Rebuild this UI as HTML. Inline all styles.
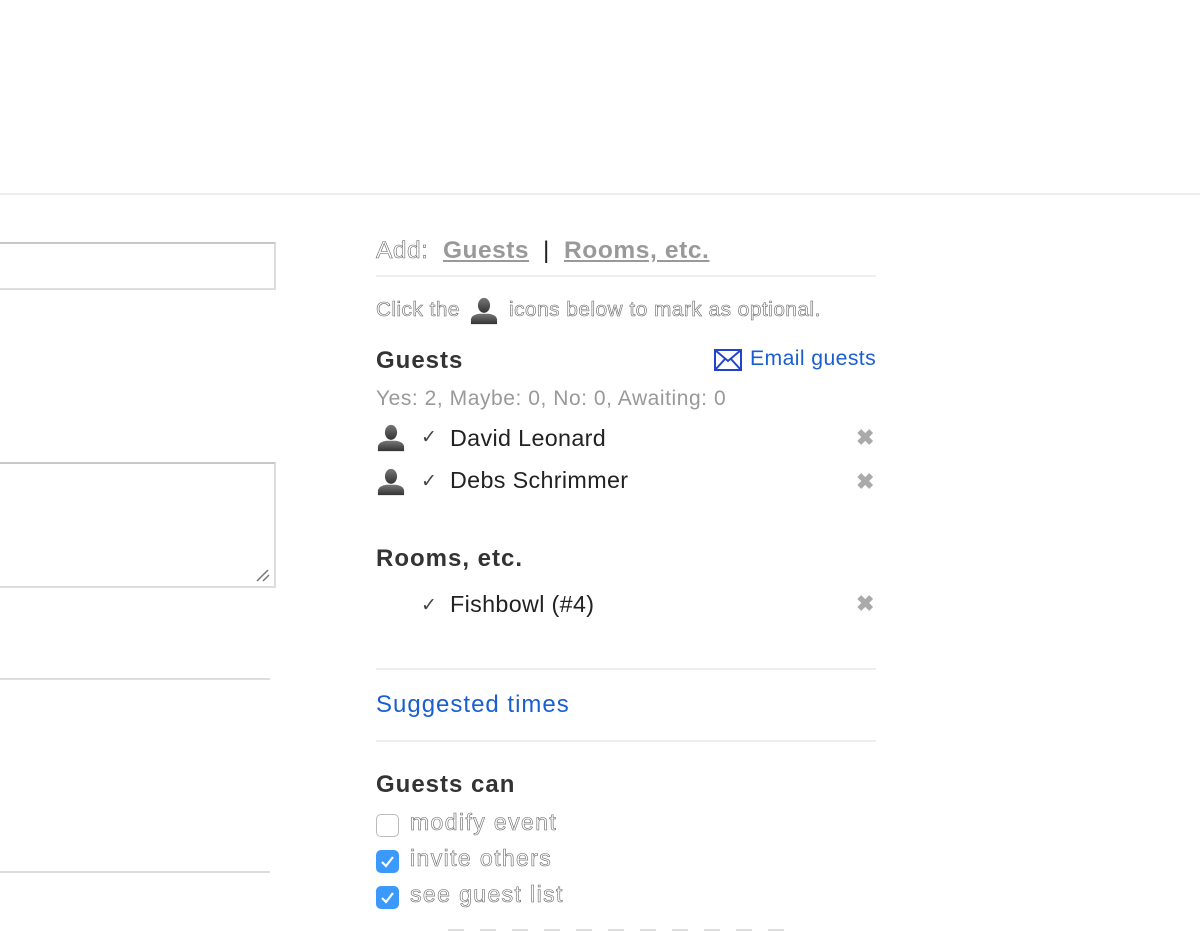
<!DOCTYPE html>
<html><head><meta charset="utf-8"><style>
body{margin:0;width:1200px;height:932px;background:#fff;position:relative;overflow:hidden;font-family:"Liberation Sans",Arial,sans-serif;}
.a{position:absolute;white-space:nowrap;}
.hol{color:#fff;-webkit-text-stroke:0.6px #666;}
.b{font-weight:bold;color:#333;font-size:24px;letter-spacing:1px;}
.n{font-size:23.3px;color:#222;letter-spacing:0.35px;}
.x{color:#aaa;font-size:22px;font-weight:bold;}
.cb{position:absolute;width:23px;height:23px;border-radius:5px;box-sizing:border-box;}
</style></head><body>
<div class="a" style="left:0;top:193px;width:1200px;height:2px;background:#eee"></div>
<div class="a" style="left:-5px;top:242px;width:277px;height:44px;border:2px solid #ddd;border-top-color:#c8c8c8"></div>
<div class="a" style="left:-5px;top:462px;width:277px;height:122px;border:2px solid #ddd;border-top-color:#c8c8c8"></div>
<svg class="a" style="left:255px;top:567px" width="16" height="16"><path d="M2 14 L13 3 M8 14 L14 8" stroke="#777" stroke-width="1.5"/></svg>
<div class="a" style="left:0;top:678px;width:270px;height:2px;background:#ddd"></div>
<div class="a" style="left:0;top:871px;width:270px;height:2px;background:#ddd"></div>

<div class="a hol" style="left:376px;top:237px;font-size:24.5px;letter-spacing:0.5px">Add:</div>
<div class="a" style="left:443px;top:237px;font-size:24.5px;font-weight:bold;color:#999;text-decoration:underline;letter-spacing:0.5px">Guests</div>
<div class="a" style="left:543px;top:237px;font-size:24.5px;color:#222">|</div>
<div class="a" style="left:564px;top:237px;font-size:24.5px;font-weight:bold;color:#999;text-decoration:underline;letter-spacing:0.6px">Rooms, etc.</div>
<div class="a" style="left:376px;top:275px;width:500px;height:2px;background:#eee"></div>

<svg width="0" height="0" style="position:absolute"><defs><linearGradient id="g" x1="0" y1="0" x2="0" y2="1"><stop offset="0" stop-color="#777"/><stop offset="1" stop-color="#333"/></linearGradient><symbol id="p" viewBox="0 0 30 30"><ellipse cx="15" cy="9" rx="6.5" ry="8" fill="url(#g)"/><path d="M1 29 V24 Q2 19 10 18 H20 Q28 19 29 24 V29 Z" fill="url(#g)"/></symbol></defs></svg>
<div class="a hol" style="left:376px;top:298px;font-size:20.7px;letter-spacing:0.5px">Click the</div>
<svg class="a" style="left:469px;top:297px" width="30" height="28"><use href="#p"/></svg>
<div class="a hol" style="left:509px;top:298px;font-size:20.7px;letter-spacing:0.55px">icons below to mark as optional.</div>

<div class="a b" style="left:376px;top:347px">Guests</div>
<svg class="a" style="left:714px;top:349px" width="28" height="22"><rect x="1" y="1" width="26" height="20" fill="none" stroke="#2244cc" stroke-width="2"/><path d="M1 1 L14 12 L27 1 M1 21 L11 10 M27 21 L17 10" fill="none" stroke="#2244cc" stroke-width="2"/></svg>
<div class="a" style="left:750px;top:347px;font-size:21.2px;color:#1a5fd0;letter-spacing:0.4px">Email guests</div>
<div class="a" style="left:376px;top:387px;font-size:21px;color:#999;letter-spacing:0.55px">Yes: 2, Maybe: 0, No: 0, Awaiting: 0</div>

<svg class="a" style="left:376px;top:424px" width="30" height="28"><use href="#p"/></svg>
<div class="a" style="left:421px;top:426px;font-size:19px;color:#444">✓</div>
<div class="a n" style="left:450px;top:425px">David Leonard</div>
<div class="a x" style="left:856px;top:425px">✖</div>
<svg class="a" style="left:376px;top:468px" width="30" height="28"><use href="#p"/></svg>
<div class="a" style="left:421px;top:470px;font-size:19px;color:#444">✓</div>
<div class="a n" style="left:450px;top:467px">Debs Schrimmer</div>
<div class="a x" style="left:856px;top:469px">✖</div>

<div class="a b" style="left:376px;top:545px">Rooms, etc.</div>
<div class="a" style="left:421px;top:594px;font-size:19px;color:#444">✓</div>
<div class="a n" style="left:450px;top:591px">Fishbowl (#4)</div>
<div class="a x" style="left:856px;top:591px">✖</div>

<div class="a" style="left:376px;top:668px;width:500px;height:2px;background:#eee"></div>
<div class="a" style="left:376px;top:691px;font-size:24px;color:#1a5fd0;letter-spacing:1px">Suggested times</div>
<div class="a" style="left:376px;top:740px;width:500px;height:2px;background:#eee"></div>

<div class="a b" style="left:376px;top:771px">Guests can</div>
<div class="cb" style="left:376px;top:814px;border:1.5px solid #bbb"></div>
<div class="a hol" style="left:410px;top:809px;font-size:23px;letter-spacing:1.4px">modify event</div>
<div class="cb" style="left:376px;top:850px;background:#3b99fc"></div>
<svg class="a" style="left:376px;top:850px" width="23" height="23"><path d="M6 12 L10 16 L17 7" fill="none" stroke="#fff" stroke-width="2.2"/></svg>
<div class="a hol" style="left:410px;top:845px;font-size:23px;letter-spacing:1.4px">invite others</div>
<div class="cb" style="left:376px;top:886px;background:#3b99fc"></div>
<svg class="a" style="left:376px;top:886px" width="23" height="23"><path d="M6 12 L10 16 L17 7" fill="none" stroke="#fff" stroke-width="2.2"/></svg>
<div class="a hol" style="left:410px;top:881px;font-size:23px;letter-spacing:1.4px">see guest list</div>
<div class="a" style="left:448px;top:929px;width:340px;height:2px;background:repeating-linear-gradient(90deg,#ddd 0 16px,transparent 16px 32px)"></div>
</body></html>
